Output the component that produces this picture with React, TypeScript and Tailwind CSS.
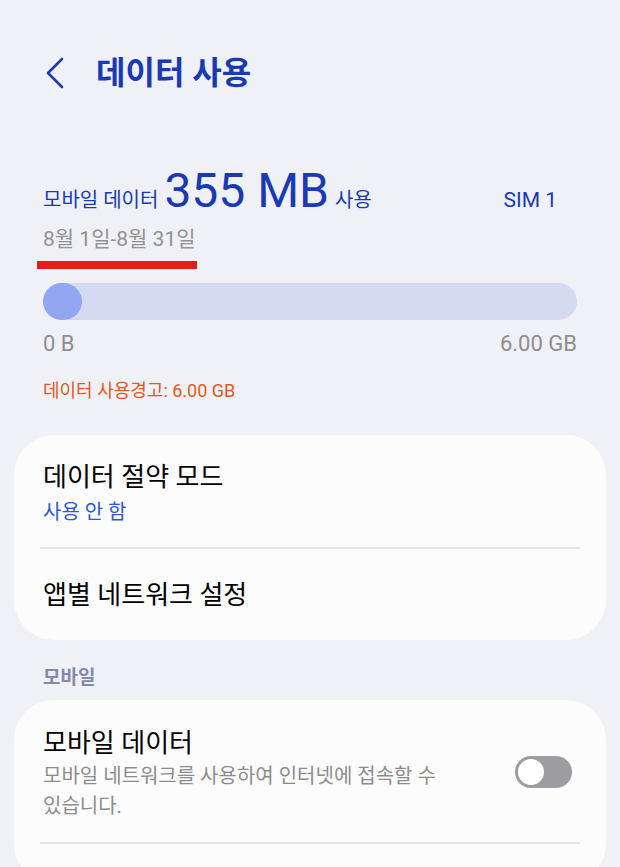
// 데이터 사용 화면
// - 상단 헤더, 사용량 요약, 진행 막대, 설정 카드

import React from 'react';

const font = { fontFamily: "Roboto, 'Noto Sans CJK KR', sans-serif" };

function Toggle() {
  return (
    <div className="w-[57px] h-[32px] rounded-full bg-[#9c9ca1] flex items-center px-[3px]">
      <div className="w-[26px] h-[26px] rounded-full bg-white" />
    </div>
  );
}

export default function App() {
  return (
    <div className="w-[620px] h-[867px] overflow-hidden bg-[#f0f1f6]" style={font}>
      {/* 헤더 */}
      <div className="flex items-center pt-[52px] h-[94px]">
        <svg className="ml-[44px]" width="22" height="34" viewBox="0 0 22 34" fill="none">
          <path d="M18 3 L4 17 L18 31" stroke="#1a3ab3" strokeWidth="2.6" strokeLinecap="round" strokeLinejoin="round" />
        </svg>
        <h1 className="ml-[30px] text-[32px] font-bold text-[#1a3ab3] leading-none">데이터 사용</h1>
      </div>

      {/* 사용량 요약 */}
      <div className="px-[43px] mt-[73px]">
        <div className="flex items-baseline">
          <span className="text-[20px] text-[#1a3ab3]">모바일 데이터</span>
          <span className="ml-[6px] text-[48px] leading-[48px] text-[#1a3ab3]">355 MB</span>
          <span className="ml-[6px] text-[20px] text-[#1a3ab3]">사용</span>
          <span className="ml-auto mr-[20px] text-[21px] text-[#1a3ab3]">SIM 1</span>
        </div>
        <div className="mt-[8px] text-[21px] text-[#929292] leading-[28px]">8월 1일-8월 31일</div>
      </div>
      <div className="ml-[37px] mt-[8px] w-[160px] h-[8px] bg-[#e51d1f]" />

      {/* 진행 막대 */}
      <div className="px-[43px] mt-[14px]">
        <div className="h-[37px] rounded-full bg-[#d5daf3]">
          <div className="w-[39px] h-[37px] rounded-full bg-[#94a6f2]" />
        </div>
        <div className="flex justify-between mt-[10px] text-[22px] text-[#8e8e8e] leading-[28px]">
          <span>0 B</span>
          <span>6.00 GB</span>
        </div>
        <div className="mt-[21px] text-[18px] text-[#e0581f] leading-[24px]">데이터 사용경고: 6.00 GB</div>
      </div>

      {/* 데이터 절약 카드 */}
      <div className="mx-[14px] mt-[32px] bg-[#fcfcfd] rounded-[40px]">
        <div className="px-[29px] pt-[25px] pb-[22px]">
          <div className="text-[26px] text-black leading-[34px]">데이터 절약 모드</div>
          <div className="mt-[5px] text-[20px] text-[#2e56d8] leading-[26px]">사용 안 함</div>
        </div>
        <div className="mx-[26px] h-[2px] bg-[#e4e4e6]" />
        <div className="px-[29px] pt-[29px] pb-[28px]">
          <div className="text-[26px] text-black leading-[34px]">앱별 네트워크 설정</div>
        </div>
      </div>

      {/* 모바일 섹션 */}
      <div className="px-[43px] mt-[25px] text-[19px] font-bold text-[#8489a9] leading-[26px]">모바일</div>
      <div className="mx-[14px] mt-[9px] bg-[#fcfcfd] rounded-[40px] pb-[40px]">
        <div className="flex items-center px-[29px] pt-[26px] pb-[21px]">
          <div className="w-[450px]">
            <div className="text-[26px] text-black leading-[34px]">모바일 데이터</div>
            <div className="mt-[1px] text-[20px] text-[#8c8c8c] leading-[30px] break-keep">모바일 네트워크를 사용하여 인터넷에 접속할 수 있습니다.</div>
          </div>
          <div className="ml-auto mr-[5px] mt-[-3px]">
            <Toggle />
          </div>
        </div>
        <div className="mx-[26px] h-[2px] bg-[#e4e4e6]" />
      </div>
    </div>
  );
}
